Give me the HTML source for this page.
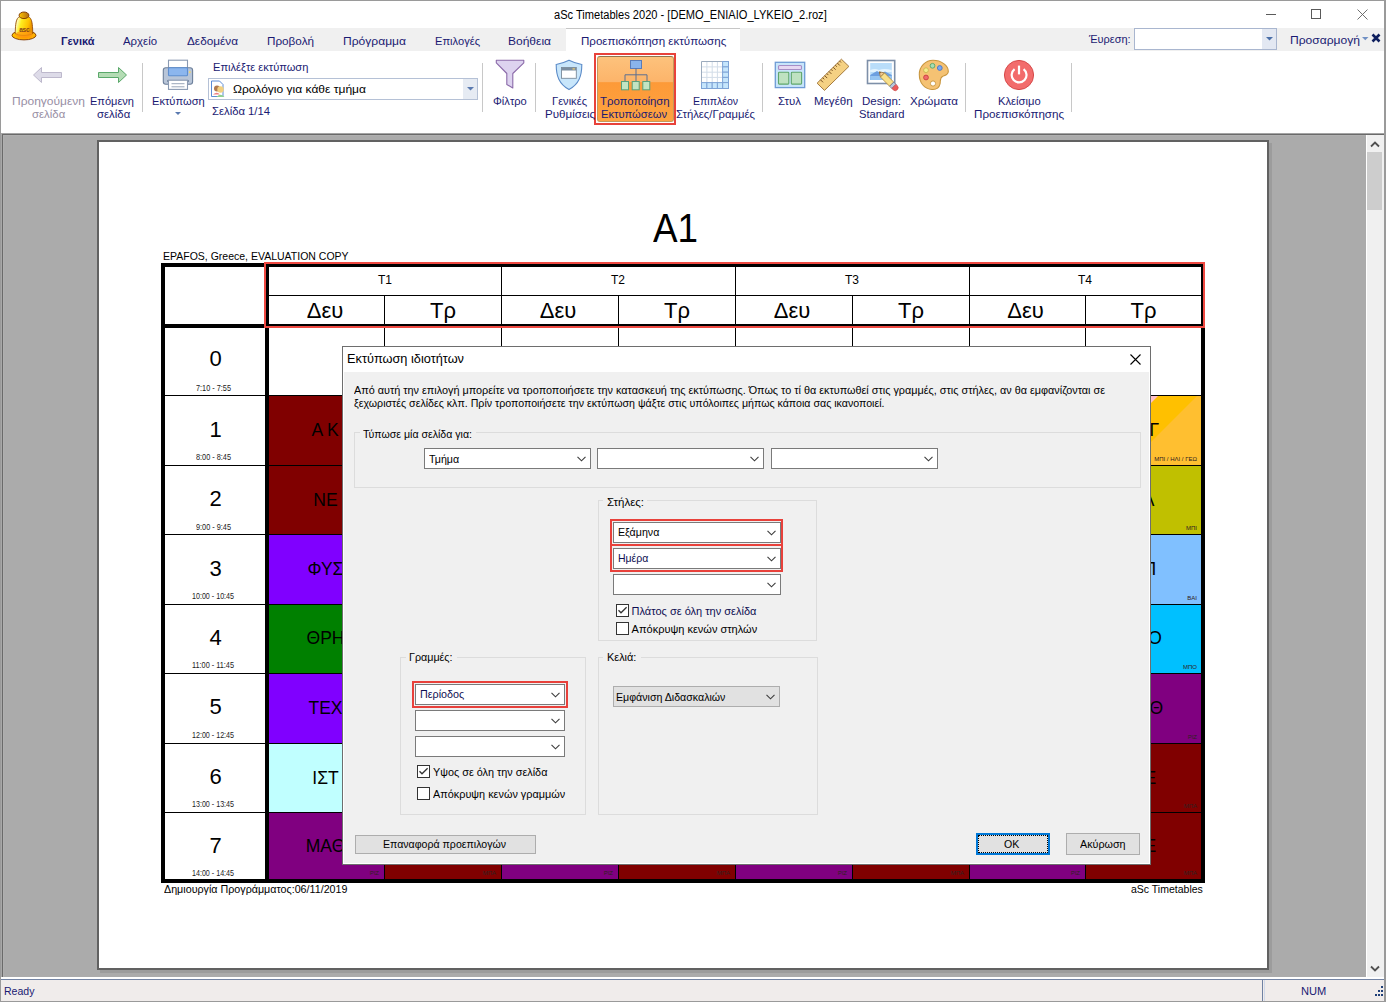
<!DOCTYPE html>
<html><head><meta charset="utf-8">
<style>
html,body{margin:0;padding:0;}
body{width:1386px;height:1002px;position:relative;overflow:hidden;background:#fff;font-family:"Liberation Sans",sans-serif;}
.a{position:absolute;box-sizing:border-box;}
.t{position:absolute;white-space:nowrap;transform-origin:0 0;font-family:"Liberation Sans",sans-serif;}
svg{position:absolute;overflow:visible;}
</style></head><body>
<!-- window frame -->
<div class="a" style="left:0;top:0;width:1386px;height:1px;background:#9a9a9a"></div>
<div class="a" style="left:0;top:0;width:1px;height:1002px;background:#9a9a9a"></div>
<div class="a" style="left:1384px;top:0;width:2px;height:1002px;background:#9a9a9a"></div>

<!-- menu band -->
<div class="a" style="left:1px;top:28px;width:1383px;height:23px;background:#f0f0f0"></div>
<div class="a" style="left:566px;top:28px;width:174px;height:23px;background:#fff;border-top:1px solid #c6c6c6"></div>
<!-- search combo -->
<div class="a" style="left:1134px;top:28px;width:143px;height:22px;background:#fff;border:1px solid #a9b6cf"></div>
<div class="a" style="left:1262px;top:29px;width:14px;height:20px;background:#e3e8f2"></div>
<svg style="left:1266px;top:37px" width="7" height="4"><path d="M0 0H7L3.5 3.5Z" fill="#4a6fa8"/></svg>
<svg style="left:1361.5px;top:37px" width="7" height="4"><path d="M0 0H6.5L3.25 3.2Z" fill="#7090c4"/></svg>
<svg style="left:1371px;top:33px" width="10" height="10"><path d="M1.5 1.5L8.5 8.5M8.5 1.5L1.5 8.5" stroke="#0e1f5e" stroke-width="2.6"/></svg>

<!-- window buttons -->
<div class="a" style="left:1266px;top:14px;width:10px;height:1px;background:#5a5a5a"></div>
<div class="a" style="left:1311px;top:9px;width:10px;height:10px;border:1px solid #5a5a5a"></div>
<svg style="left:1357px;top:9px" width="11" height="11"><path d="M0.5 0.5L10.5 10.5M10.5 0.5L0.5 10.5" stroke="#606060" stroke-width="0.9"/></svg>

<!-- bell icon -->
<svg style="left:0px;top:0px" width="48" height="48" viewBox="0 0 48 48">
 <defs>
  <linearGradient id="bgb" x1="0" x2="1" y1="0" y2="0.3"><stop offset="0" stop-color="#ffb800"/><stop offset="0.2" stop-color="#fffbb0"/><stop offset="0.4" stop-color="#ffee20"/><stop offset="0.8" stop-color="#ffc000"/><stop offset="1" stop-color="#e89000"/></linearGradient>
  <radialGradient id="bgr" cx="0.55" cy="0.6" r="0.6"><stop offset="0" stop-color="#ff8a00"/><stop offset="0.6" stop-color="#ffb000"/><stop offset="1" stop-color="#ffd000"/></radialGradient>
  <linearGradient id="bgk" x1="0" x2="1"><stop offset="0" stop-color="#ffc400"/><stop offset="1" stop-color="#b06a10"/></linearGradient>
 </defs>
 <ellipse cx="24" cy="35.3" rx="12" ry="4.6" fill="url(#bgr)" stroke="#7e3400" stroke-width="0.9"/>
 <path d="M15.2 33.5 C15.5 28 15.2 20 18.5 17.3 C21 15.5 27 15.5 29.5 17.3 C32.8 20 32.5 28 32.8 33.5 C30 36 18 36 15.2 33.5 Z" fill="url(#bgb)" stroke="#8a4000" stroke-width="0.8"/>
 <ellipse cx="24" cy="34.2" rx="8.5" ry="3.2" fill="#ff9a10" opacity="0.75"/>
 <ellipse cx="24" cy="15.3" rx="4.9" ry="3.3" fill="url(#bgk)" stroke="#7a3400" stroke-width="0.9"/>
 <text x="24.3" y="31.8" font-family="Liberation Sans" font-size="6.6" font-weight="bold" fill="#8a4418" text-anchor="middle" letter-spacing="-0.3">asc</text>
</svg>

<!-- ribbon -->
<div class="a" style="left:142px;top:63px;width:1px;height:49px;background:#c8c8c8"></div>
<div class="a" style="left:482px;top:63px;width:1px;height:49px;background:#c8c8c8"></div>
<div class="a" style="left:535px;top:63px;width:1px;height:49px;background:#c8c8c8"></div>
<div class="a" style="left:762px;top:63px;width:1px;height:49px;background:#c8c8c8"></div>
<div class="a" style="left:965px;top:63px;width:1px;height:49px;background:#c8c8c8"></div>
<div class="a" style="left:1071px;top:63px;width:1px;height:49px;background:#c8c8c8"></div>

<!-- arrows -->
<svg style="left:32px;top:66px" width="32" height="18" viewBox="0 0 32 18">
 <path d="M1.5 9 L9.5 1.5 V6.5 H29.5 V11.5 H9.5 V16.5 Z" fill="#dddbe8" stroke="#bdb8cc" stroke-width="1"/>
</svg>
<svg style="left:97px;top:66px" width="32" height="18" viewBox="0 0 32 18">
 <path d="M29.5 9 L21.5 1.5 V6.5 H1.5 V11.5 H21.5 V16.5 Z" fill="#b4dcb4" stroke="#5aa86a" stroke-width="1"/>
</svg>
<!-- printer -->
<svg style="left:162px;top:59px" width="32" height="32" viewBox="0 0 32 32">
 <rect x="6.5" y="1.2" width="19" height="8" fill="#fff" stroke="#8a9ab2" stroke-width="1.1"/>
 <rect x="1.3" y="8.7" width="29.3" height="16.5" rx="2.5" fill="#b8c5d8" stroke="#6c7f9a" stroke-width="1.1"/>
 <rect x="6.5" y="8.7" width="19" height="8" rx="1" fill="#8cb6ee" stroke="#5d8ed0" stroke-width="1.1"/>
 <rect x="27" y="12.3" width="1.6" height="1.6" fill="#f6d860"/>
 <rect x="5" y="21" width="22" height="2" rx="1" fill="#6c7f9a"/>
 <rect x="6.5" y="21.2" width="19" height="9.2" fill="#fff" stroke="#8a9ab2" stroke-width="1.1"/>
 <rect x="9.5" y="24.2" width="13" height="1" fill="#9aa6b8"/>
 <rect x="9.5" y="27.3" width="13" height="1" fill="#9aa6b8"/>
</svg>
<svg style="left:175px;top:112px" width="6" height="4"><path d="M0 0H6L3 3Z" fill="#5a7ab0"/></svg>
<!-- print combo -->
<div class="a" style="left:208px;top:78px;width:270px;height:22px;background:#fff;border:1px solid #b5c1d6"></div>
<div class="a" style="left:463px;top:79px;width:14px;height:20px;background:#e6ebf3"></div>
<svg style="left:467px;top:87px" width="7" height="4"><path d="M0 0H7L3.5 3.5Z" fill="#5a7ab0"/></svg>
<svg style="left:210px;top:80px" width="20" height="18" viewBox="0 0 20 18">
 <path d="M1.5 1 H9.5 L13 4.5 V16.5 H1.5 Z" fill="#fff" stroke="#4a7fd0" stroke-width="0.9"/>
 <circle cx="7" cy="8.5" r="3" fill="#b07a50"/>
 <path d="M3 14.5 Q7 11 10 14.5 Z" fill="#f08080"/>
 <circle cx="10.5" cy="9.5" r="3.2" fill="#f2d080"/>
 <path d="M6.5 17 Q10.5 12.5 14.5 17 Z" fill="#90d090"/>
</svg>

<!-- funnel -->
<svg style="left:495px;top:59px" width="31" height="31" viewBox="0 0 31 31">
 <path d="M1.3 1.3 H28.8 V3.8 L17.8 14.5 V29 L11.8 25.5 V14.5 L1.3 3.8 Z" fill="#ddd3ef" stroke="#8b6aa9" stroke-width="1.1" stroke-linejoin="round"/>
</svg>
<!-- shield -->
<svg style="left:555px;top:59px" width="28" height="32" viewBox="0 0 28 32">
 <path d="M14 1.2 C10 3.2 5.5 4.8 1.2 5.5 C1.2 17 4 25 14 30.6 C24 25 26.8 17 26.8 5.5 C22.5 4.8 18 3.2 14 1.2 Z" fill="#c8e6fb" stroke="#5b8bc8" stroke-width="1.1"/>
 <rect x="6.5" y="8.5" width="14.8" height="10.8" fill="#fff" stroke="#7a8a9a" stroke-width="0.9"/>
 <rect x="6.5" y="8.5" width="14.8" height="3" fill="#7a8da0"/>
 <rect x="17.5" y="9.3" width="2.4" height="1.2" fill="#f0d070"/>
</svg>

<!-- orange active button -->
<div class="a" style="left:594px;top:53px;width:82px;height:72px;border:2px solid #e8423a"></div>
<div class="a" style="left:597px;top:56px;width:77px;height:66px;border:1px solid #c49a5a;border-top-color:#8e7650;border-radius:3px;background:linear-gradient(#fdc27c 0%,#fcb46a 39%,#fd9a38 40%,#fea340 100%)"></div>
<svg style="left:620px;top:59px" width="32" height="32" viewBox="0 0 32 32">
 <rect x="10.5" y="1.5" width="11" height="8" fill="#8ab4ec" stroke="#5a7cb8" stroke-width="1"/>
 <path d="M16 9.5 V15.8 M5 22 V15.8 H27 V22 M16 15.8 V22" fill="none" stroke="#5a6e92" stroke-width="1"/>
 <rect x="1.5" y="22.5" width="7" height="8.3" fill="#c2e4c2" stroke="#5aa07a" stroke-width="1"/>
 <rect x="12.2" y="22.5" width="7" height="8.3" fill="#c2e4c2" stroke="#5aa07a" stroke-width="1"/>
 <rect x="22.8" y="22.5" width="7" height="8.3" fill="#c2e4c2" stroke="#5aa07a" stroke-width="1"/>
</svg>

<!-- grid icon -->
<svg style="left:701px;top:61px" width="28" height="28" viewBox="0 0 28 28">
 <rect x="0.5" y="0.5" width="27" height="27" fill="#fff"/>
 <path d="M5.9 0.5V21.6M11.2 0.5V21.6M16.4 0.5V21.6M0.5 5.9H21.6M0.5 11.2H21.6M0.5 16.4H21.6" stroke="#d3dde8" stroke-width="1"/>
 <path d="M0.5 21.6V0.5H21.6" fill="none" stroke="#9cabbd" stroke-width="1"/>
 <rect x="21.6" y="0.5" width="5.899999999999999" height="5.4" fill="#c6e6fc" stroke="#7ea4d6" stroke-width="1"/><rect x="21.6" y="5.9" width="5.899999999999999" height="5.299999999999999" fill="#c6e6fc" stroke="#7ea4d6" stroke-width="1"/><rect x="21.6" y="11.2" width="5.899999999999999" height="5.199999999999999" fill="#c6e6fc" stroke="#7ea4d6" stroke-width="1"/><rect x="21.6" y="16.4" width="5.899999999999999" height="5.200000000000003" fill="#c6e6fc" stroke="#7ea4d6" stroke-width="1"/><rect x="21.6" y="21.6" width="5.899999999999999" height="5.899999999999999" fill="#c6e6fc" stroke="#7ea4d6" stroke-width="1"/><rect x="0.5" y="21.6" width="5.4" height="5.899999999999999" fill="#c6e6fc" stroke="#7ea4d6" stroke-width="1"/><rect x="5.9" y="21.6" width="5.299999999999999" height="5.899999999999999" fill="#c6e6fc" stroke="#7ea4d6" stroke-width="1"/><rect x="11.2" y="21.6" width="5.199999999999999" height="5.899999999999999" fill="#c6e6fc" stroke="#7ea4d6" stroke-width="1"/><rect x="16.4" y="21.6" width="5.200000000000003" height="5.899999999999999" fill="#c6e6fc" stroke="#7ea4d6" stroke-width="1"/>
</svg>

<!-- style icon -->
<svg style="left:774px;top:61px" width="32" height="28" viewBox="0 0 32 28">
 <rect x="1.3" y="1.3" width="29.4" height="25.3" fill="#c8e5fa" stroke="#6f9bd5" stroke-width="1.3"/>
 <rect x="4.5" y="4.5" width="23" height="4" rx="1" fill="#e6d8f2" stroke="#a68dc6" stroke-width="1.1"/>
 <rect x="4.5" y="11.3" width="10.3" height="11.8" rx="0.8" fill="#bfe2c1" stroke="#5fa66b" stroke-width="1.1"/>
 <rect x="17.3" y="11.3" width="10.3" height="11.8" rx="0.8" fill="#bfe2c1" stroke="#5fa66b" stroke-width="1.1"/>
</svg>
<!-- ruler -->
<svg style="left:816px;top:58px" width="34" height="34" viewBox="0 0 34 34">
 <path d="M1.1 25.2 L25.4 1.2 L32.9 8.4 L8.5 32.4 Z" fill="#f5d183" stroke="#a57b40" stroke-width="1"/>
 <path d="M4.5 21.8l2.5 2.5M6.6 19.7l1.6 1.6M8.7 17.6l2.5 2.5M10.8 15.5l1.6 1.6M12.9 13.4l2.5 2.5M15 11.3l1.6 1.6M17.1 9.2l2.5 2.5M19.2 7.1l1.6 1.6M21.3 5l2.5 2.5M23.4 2.9l1.6 1.6" stroke="#7a5020" stroke-width="1"/>
</svg>
<!-- design icon -->
<svg style="left:866px;top:59px" width="34" height="33" viewBox="0 0 34 33">
 <rect x="1.5" y="1.5" width="27.2" height="23" fill="#fff" stroke="#7d8fa8" stroke-width="1.6"/>
 <rect x="4.2" y="4" width="21.6" height="17" fill="#b9ddf9"/>
 <path d="M4.2 11 Q9 9 13 11 Q18 9 25.8 11 V13 H4.2Z" fill="#e4f4fe"/>
 <path d="M4.2 16 L11 12 L15 14.5 L19 12.5 L25.8 16 V21 H4.2 Z" fill="#6c9fe0"/>
 <rect x="4.2" y="17" width="21.6" height="4" fill="#96c5f2"/>
 <g transform="translate(13.3 12.8) rotate(45)">
  <path d="M0 0 L4.5 -2.9 V2.9 Z" fill="#f2c890" stroke="#a07a40" stroke-width="0.8" stroke-linejoin="round"/>
  <path d="M0 0 L1.6 -1 V1 Z" fill="#7a5a30"/>
  <rect x="4.5" y="-2.9" width="13" height="5.8" fill="#f8e08a" stroke="#b08a40" stroke-width="0.8"/>
  <rect x="17.5" y="-2.9" width="3.2" height="5.8" fill="#b8c8dc" stroke="#6a7a90" stroke-width="0.8"/>
  <path d="M20.7 -2.9 H22.5 A2.9 2.9 0 0 1 22.5 2.9 H20.7 Z" fill="#ea5a5a" stroke="#c84040" stroke-width="0.6"/>
 </g>
</svg>
<!-- palette -->
<svg style="left:918px;top:59px" width="32" height="32" viewBox="0 0 32 32">
 <path d="M15 1.3 C23 1.3 30.5 6.5 30.3 12.5 C30.1 16 27 16.3 24.5 17.5 C21.5 19 22.7 22 22 25 C21 29.5 17.5 30.7 14 30.5 C6.5 30 1.3 24 1.3 15.5 C1.3 7.5 7.5 1.3 15 1.3 Z" fill="#f5c273" stroke="#c8963e" stroke-width="1.1"/>
 <circle cx="14.5" cy="6.8" r="2.4" fill="#a6dcb4" stroke="#56a66a" stroke-width="0.9"/>
 <circle cx="21.8" cy="9" r="2.4" fill="#7ca8ee" stroke="#4a74c4" stroke-width="0.9"/>
 <circle cx="8" cy="11.2" r="2.4" fill="#f6ec8c" stroke="#c8b850" stroke-width="0.9"/>
 <circle cx="8" cy="18.5" r="2.4" fill="#f06a6a" stroke="#c84040" stroke-width="0.9"/>
 <circle cx="15" cy="24.5" r="2.6" fill="#fff" stroke="#c8963e" stroke-width="0.9"/>
</svg>
<!-- power -->
<svg style="left:1003px;top:59px" width="32" height="32" viewBox="0 0 32 32">
 <circle cx="16" cy="16" r="14.6" fill="#f26c6c" stroke="#d64a4a" stroke-width="1"/>
 <path d="M11.6 10.2 A7.4 7.4 0 1 0 20.6 10.2" fill="none" stroke="#fff" stroke-width="2.2"/>
 <path d="M16 6.6 V15.4" stroke="#fff" stroke-width="2.2"/>
</svg>

<!-- ribbon bottom / main area -->
<div class="a" style="left:1px;top:133px;width:1383px;height:1px;background:#a4a4a4"></div>
<div class="a" style="left:1px;top:134px;width:1383px;height:1px;background:#6a6a6a"></div>
<div class="a" style="left:1px;top:135px;width:1365px;height:842px;background:#ababab"></div>
<div class="a" style="left:1px;top:134px;width:1px;height:843px;background:#a8a8a8"></div>
<div class="a" style="left:2px;top:134px;width:1px;height:843px;background:#6a6a6a"></div>
<div class="a" style="left:3px;top:135px;width:1px;height:842px;background:#b0b0b0"></div>
<div class="a" style="left:3px;top:135px;width:1363px;height:1px;background:#b0b0b0"></div>
<!-- page shadow + page -->
<div class="a" style="left:100px;top:143px;width:1172px;height:830px;background:#9c9c9c"></div>
<div class="a" style="left:97px;top:140px;width:1172px;height:830px;background:#fff;border:2px solid #616161"></div>

<!-- scrollbar -->
<div class="a" style="left:1366px;top:135px;width:18px;height:842px;background:#f0f0f0;border-left:1px solid #fff"></div>
<div class="a" style="left:1367px;top:152px;width:15px;height:58px;background:#cdcdcd"></div>
<svg style="left:1370px;top:141px" width="10" height="7"><path d="M1 5.5L5 1.5L9 5.5" fill="none" stroke="#505050" stroke-width="1.8"/></svg>
<svg style="left:1370px;top:965px" width="10" height="7"><path d="M1 1.5L5 5.5L9 1.5" fill="none" stroke="#505050" stroke-width="1.8"/></svg>

<!-- status bar -->
<div class="a" style="left:1px;top:977px;width:1383px;height:2px;background:#fff"></div>
<div class="a" style="left:1px;top:979px;width:1383px;height:1px;background:#7384a4"></div>
<div class="a" style="left:1px;top:980px;width:1383px;height:21px;background:#f0eceb"></div>
<div class="a" style="left:1px;top:1001px;width:1385px;height:1px;background:#9a9a9a"></div>
<div class="a" style="left:1262px;top:980px;width:1px;height:21px;background:#6f81a2"></div>
<div class="a" style="left:1264px;top:980px;width:1px;height:21px;background:#d0d8e8"></div>
<svg style="left:1374px;top:985px" width="10" height="12">
 <rect x="7" y="1" width="2" height="2" fill="#1f3f78"/>
 <rect x="4" y="5" width="2" height="2" fill="#1f3f78"/><rect x="7" y="5" width="2" height="2" fill="#1f3f78"/>
 <rect x="1" y="9" width="2" height="2" fill="#1f3f78"/><rect x="4" y="9" width="2" height="2" fill="#1f3f78"/><rect x="7" y="9" width="2" height="2" fill="#1f3f78"/>
</svg>

<div class="a" style="left:269px;top:396px;width:115px;height:69px;background:#800000;"></div>
<div class="a" style="left:1086px;top:396px;width:115px;height:69px;background:#ffc000;"></div>
<div class="a" style="left:269px;top:466px;width:115px;height:68px;background:#800000;"></div>
<div class="a" style="left:1086px;top:466px;width:115px;height:68px;background:#c0c000;"></div>
<div class="a" style="left:269px;top:535px;width:115px;height:69px;background:#8000ff;"></div>
<div class="a" style="left:1086px;top:535px;width:115px;height:69px;background:#80c0ff;"></div>
<div class="a" style="left:269px;top:605px;width:115px;height:68px;background:#008000;"></div>
<div class="a" style="left:1086px;top:605px;width:115px;height:68px;background:#00c0ff;"></div>
<div class="a" style="left:269px;top:674px;width:115px;height:69px;background:#8000ff;"></div>
<div class="a" style="left:1086px;top:674px;width:115px;height:69px;background:#800080;"></div>
<div class="a" style="left:269px;top:744px;width:115px;height:68px;background:#c0ffff;"></div>
<div class="a" style="left:1086px;top:744px;width:115px;height:68px;background:#800000;"></div>
<div class="a" style="left:269px;top:813px;width:115px;height:66px;background:#800080;"></div>
<div class="a" style="left:1086px;top:813px;width:115px;height:66px;background:#800000;"></div>
<div class="a" style="left:269px;top:813px;width:115px;height:66px;background:#800080;"></div>
<div class="a" style="left:385px;top:813px;width:116px;height:66px;background:#800000;"></div>
<div class="a" style="left:502px;top:813px;width:116px;height:66px;background:#800080;"></div>
<div class="a" style="left:619px;top:813px;width:116px;height:66px;background:#800000;"></div>
<div class="a" style="left:736px;top:813px;width:116px;height:66px;background:#800080;"></div>
<div class="a" style="left:853px;top:813px;width:116px;height:66px;background:#800000;"></div>
<div class="a" style="left:970px;top:813px;width:115px;height:66px;background:#800080;"></div>
<div class="a" style="left:1086px;top:813px;width:115px;height:66px;background:#800000;"></div>
<svg style="left:1086px;top:396px" width="115" height="69" viewBox="0 0 115 69"><polygon points="111,0 115,0 115,69 42,69" fill="#ffbf30"/><polygon points="64,0 72,0 64,8" fill="#ffc0cb"/></svg>
<div class="a" style="left:161px;top:263px;width:1044px;height:4px;background:#000;"></div>
<div class="a" style="left:161px;top:879px;width:1044px;height:4px;background:#000;"></div>
<div class="a" style="left:161px;top:263px;width:4px;height:620px;background:#000;"></div>
<div class="a" style="left:1201px;top:263px;width:4px;height:620px;background:#000;"></div>
<div class="a" style="left:265px;top:263px;width:4px;height:620px;background:#000;"></div>
<div class="a" style="left:161px;top:324px;width:1044px;height:4px;background:#000;"></div>
<div class="a" style="left:269px;top:295px;width:932px;height:1px;background:#000;"></div>
<div class="a" style="left:501px;top:267px;width:1px;height:612px;background:#000;"></div>
<div class="a" style="left:735px;top:267px;width:1px;height:612px;background:#000;"></div>
<div class="a" style="left:969px;top:267px;width:1px;height:612px;background:#000;"></div>
<div class="a" style="left:384px;top:296px;width:1px;height:583px;background:#000;"></div>
<div class="a" style="left:618px;top:296px;width:1px;height:583px;background:#000;"></div>
<div class="a" style="left:852px;top:296px;width:1px;height:583px;background:#000;"></div>
<div class="a" style="left:1085px;top:296px;width:1px;height:583px;background:#000;"></div>
<div class="a" style="left:165px;top:395px;width:1036px;height:1px;background:#000;"></div>
<div class="a" style="left:165px;top:465px;width:1036px;height:1px;background:#000;"></div>
<div class="a" style="left:165px;top:534px;width:1036px;height:1px;background:#000;"></div>
<div class="a" style="left:165px;top:604px;width:1036px;height:1px;background:#000;"></div>
<div class="a" style="left:165px;top:673px;width:1036px;height:1px;background:#000;"></div>
<div class="a" style="left:165px;top:743px;width:1036px;height:1px;background:#000;"></div>
<div class="a" style="left:165px;top:812px;width:1036px;height:1px;background:#000;"></div>
<div class="a" style="left:264px;top:262px;width:941px;height:66px;border:2px solid #ef4a42"></div>
<div class="t" style="left:653.40px;top:208.14px;font-size:40px;line-height:40px;color:#000;font-weight:normal;transform:scaleX(0.9198);">A1</div>
<div class="t" style="left:163.00px;top:251.11px;font-size:10.5px;line-height:10.5px;color:#000;font-weight:normal;">EPAFOS, Greece, EVALUATION COPY</div>
<div class="t" style="left:378.00px;top:273.84px;font-size:12px;line-height:12px;color:#000;font-weight:normal;">T1</div>
<div class="t" style="left:611.00px;top:273.84px;font-size:12px;line-height:12px;color:#000;font-weight:normal;">T2</div>
<div class="t" style="left:845.00px;top:273.84px;font-size:12px;line-height:12px;color:#000;font-weight:normal;">T3</div>
<div class="t" style="left:1078.00px;top:273.84px;font-size:12px;line-height:12px;color:#000;font-weight:normal;">T4</div>
<div class="t" style="left:306.73px;top:300.38px;font-size:22px;line-height:22px;color:#000;font-weight:normal;">Δευ</div>
<div class="t" style="left:430.02px;top:300.38px;font-size:22px;line-height:22px;color:#000;font-weight:normal;">Τρ</div>
<div class="t" style="left:539.73px;top:300.38px;font-size:22px;line-height:22px;color:#000;font-weight:normal;">Δευ</div>
<div class="t" style="left:664.02px;top:300.38px;font-size:22px;line-height:22px;color:#000;font-weight:normal;">Τρ</div>
<div class="t" style="left:773.73px;top:300.38px;font-size:22px;line-height:22px;color:#000;font-weight:normal;">Δευ</div>
<div class="t" style="left:898.02px;top:300.38px;font-size:22px;line-height:22px;color:#000;font-weight:normal;">Τρ</div>
<div class="t" style="left:1007.23px;top:300.38px;font-size:22px;line-height:22px;color:#000;font-weight:normal;">Δευ</div>
<div class="t" style="left:1130.52px;top:300.38px;font-size:22px;line-height:22px;color:#000;font-weight:normal;">Τρ</div>
<div class="t" style="left:163.50px;top:884.11px;font-size:10.5px;line-height:10.5px;color:#000;font-weight:normal;transform:scaleX(1.0205);">Δημιουργία Προγράμματος:06/11/2019</div>
<div class="t" style="left:1131.03px;top:884.11px;font-size:10.5px;line-height:10.5px;color:#000;font-weight:normal;">aSc Timetables</div>
<div class="t" style="left:209.38px;top:348.38px;font-size:22px;line-height:22px;color:#000;font-weight:normal;">0</div>
<div class="t" style="left:195.50px;top:383.80px;font-size:8.5px;line-height:8.5px;color:#222;font-weight:normal;transform:scaleX(0.8612);">7:10 - 7:55</div>
<div class="t" style="left:209.38px;top:419.38px;font-size:22px;line-height:22px;color:#000;font-weight:normal;">1</div>
<div class="t" style="left:195.50px;top:452.80px;font-size:8.5px;line-height:8.5px;color:#222;font-weight:normal;transform:scaleX(0.8612);">8:00 - 8:45</div>
<div class="t" style="left:209.38px;top:488.38px;font-size:22px;line-height:22px;color:#000;font-weight:normal;">2</div>
<div class="t" style="left:195.50px;top:522.80px;font-size:8.5px;line-height:8.5px;color:#222;font-weight:normal;transform:scaleX(0.8612);">9:00 - 9:45</div>
<div class="t" style="left:209.38px;top:558.38px;font-size:22px;line-height:22px;color:#000;font-weight:normal;">3</div>
<div class="t" style="left:192.00px;top:591.80px;font-size:8.5px;line-height:8.5px;color:#222;font-weight:normal;transform:scaleX(0.8384);">10:00 - 10:45</div>
<div class="t" style="left:209.38px;top:627.38px;font-size:22px;line-height:22px;color:#000;font-weight:normal;">4</div>
<div class="t" style="left:192.00px;top:660.80px;font-size:8.5px;line-height:8.5px;color:#222;font-weight:normal;transform:scaleX(0.8601);">11:00 - 11:45</div>
<div class="t" style="left:209.38px;top:696.38px;font-size:22px;line-height:22px;color:#000;font-weight:normal;">5</div>
<div class="t" style="left:192.00px;top:730.80px;font-size:8.5px;line-height:8.5px;color:#222;font-weight:normal;transform:scaleX(0.8384);">12:00 - 12:45</div>
<div class="t" style="left:209.38px;top:766.38px;font-size:22px;line-height:22px;color:#000;font-weight:normal;">6</div>
<div class="t" style="left:192.00px;top:799.80px;font-size:8.5px;line-height:8.5px;color:#222;font-weight:normal;transform:scaleX(0.8384);">13:00 - 13:45</div>
<div class="t" style="left:209.38px;top:835.38px;font-size:22px;line-height:22px;color:#000;font-weight:normal;">7</div>
<div class="t" style="left:192.00px;top:868.80px;font-size:8.5px;line-height:8.5px;color:#222;font-weight:normal;transform:scaleX(0.8384);">14:00 - 14:45</div>
<div class="t" style="left:311.40px;top:422.19px;font-size:17.5px;line-height:17.5px;color:#000;font-weight:normal;">Α Κ</div>
<div class="t" style="left:313.34px;top:492.19px;font-size:17.5px;line-height:17.5px;color:#000;font-weight:normal;">ΝΕ</div>
<div class="t" style="left:307.56px;top:561.19px;font-size:17.5px;line-height:17.5px;color:#000;font-weight:normal;">ΦΥΣ</div>
<div class="t" style="left:306.54px;top:630.19px;font-size:17.5px;line-height:17.5px;color:#000;font-weight:normal;">ΘΡΗ</div>
<div class="t" style="left:308.48px;top:700.19px;font-size:17.5px;line-height:17.5px;color:#000;font-weight:normal;">ΤΕΧ</div>
<div class="t" style="left:312.32px;top:770.19px;font-size:17.5px;line-height:17.5px;color:#000;font-weight:normal;">ΙΣΤ</div>
<div class="t" style="left:305.75px;top:838.19px;font-size:17.5px;line-height:17.5px;color:#000;font-weight:normal;">ΜΑΘ</div>
<div class="t" style="left:1149.60px;top:422.19px;font-size:17.5px;line-height:17.5px;color:#000;font-weight:normal;">Γ</div>
<div class="t" style="left:1142.80px;top:492.19px;font-size:17.5px;line-height:17.5px;color:#000;font-weight:normal;">Λ</div>
<div class="t" style="left:1143.60px;top:561.19px;font-size:17.5px;line-height:17.5px;color:#000;font-weight:normal;">Π</div>
<div class="t" style="left:1148.20px;top:630.19px;font-size:17.5px;line-height:17.5px;color:#000;font-weight:normal;">Ο</div>
<div class="t" style="left:1149.50px;top:700.19px;font-size:17.5px;line-height:17.5px;color:#000;font-weight:normal;">Θ</div>
<div class="t" style="left:1144.60px;top:770.19px;font-size:17.5px;line-height:17.5px;color:#000;font-weight:normal;">Ε</div>
<div class="t" style="left:1144.60px;top:838.19px;font-size:17.5px;line-height:17.5px;color:#000;font-weight:normal;">Ε</div>
<div class="t" style="left:1154.20px;top:455.92px;font-size:6px;line-height:6px;color:#302020;font-weight:normal;">ΜΠΙ / ΗΛΙ / ΓΕΩ</div>
<div class="t" style="left:1186.00px;top:524.92px;font-size:6px;line-height:6px;color:#302020;font-weight:normal;">ΜΠΙ</div>
<div class="t" style="left:1187.33px;top:594.92px;font-size:6px;line-height:6px;color:#302020;font-weight:normal;">ΒΑΙ</div>
<div class="t" style="left:1183.00px;top:663.92px;font-size:6px;line-height:6px;color:#302020;font-weight:normal;">ΜΠΟ</div>
<div class="t" style="left:1187.67px;top:733.92px;font-size:6px;line-height:6px;color:#302020;font-weight:normal;">ΡΙΖ</div>
<div class="t" style="left:1183.67px;top:802.92px;font-size:6px;line-height:6px;color:#302020;font-weight:normal;">ΜΠΑ</div>
<div class="t" style="left:1183.67px;top:869.92px;font-size:6px;line-height:6px;color:#302020;font-weight:normal;">ΜΠΑ</div>
<div class="t" style="left:369.67px;top:869.92px;font-size:6px;line-height:6px;color:#302020;font-weight:normal;">ΡΙΖ</div>
<div class="t" style="left:482.67px;top:869.92px;font-size:6px;line-height:6px;color:#302020;font-weight:normal;">ΜΠΑ</div>
<div class="t" style="left:603.67px;top:869.92px;font-size:6px;line-height:6px;color:#302020;font-weight:normal;">ΡΙΖ</div>
<div class="t" style="left:716.67px;top:869.92px;font-size:6px;line-height:6px;color:#302020;font-weight:normal;">ΜΠΑ</div>
<div class="t" style="left:837.67px;top:869.92px;font-size:6px;line-height:6px;color:#302020;font-weight:normal;">ΡΙΖ</div>
<div class="t" style="left:950.67px;top:869.92px;font-size:6px;line-height:6px;color:#302020;font-weight:normal;">ΜΠΑ</div>
<div class="t" style="left:1070.67px;top:869.92px;font-size:6px;line-height:6px;color:#302020;font-weight:normal;">ΡΙΖ</div>

<div class="a" style="left:342px;top:346px;width:809px;height:519px;background:#fff;border:1px solid #6e6e6e;"></div>
<div class="a" style="left:344px;top:372px;width:805px;height:491px;background:#f0f0f0;"></div>
<svg style="left:1130px;top:354px" width="11" height="11"><path d="M0.5 0.5L10.5 10.5M10.5 0.5L0.5 10.5" stroke="#000" stroke-width="1.1"/></svg>
<div class="a" style="left:354px;top:432px;width:787px;height:56px;border:1px solid #dcdcdc;"></div>
<div class="a" style="left:598px;top:500px;width:219px;height:141px;border:1px solid #dcdcdc;"></div>
<div class="a" style="left:400px;top:657px;width:186px;height:158px;border:1px solid #dcdcdc;"></div>
<div class="a" style="left:598px;top:657px;width:220px;height:158px;border:1px solid #dcdcdc;"></div>
<div class="a" style="left:360px;top:428px;width:116px;height:11px;background:#f0f0f0;"></div>
<div class="a" style="left:603px;top:496px;width:44px;height:11px;background:#f0f0f0;"></div>
<div class="a" style="left:406px;top:653px;width:51px;height:11px;background:#f0f0f0;"></div>
<div class="a" style="left:603px;top:653px;width:38px;height:11px;background:#f0f0f0;"></div>
<div class="a" style="left:424px;top:448px;width:167px;height:21px;background:#fff;border:1px solid #7a7a7a;"></div>
<svg style="left:577.0px;top:455.5px" width="9" height="6"><path d="M0.5 0.8L4.5 4.8L8.5 0.8" fill="none" stroke="#3c3c3c" stroke-width="1.1"/></svg>
<div class="a" style="left:597px;top:448px;width:167px;height:21px;background:#fff;border:1px solid #7a7a7a;"></div>
<svg style="left:750.0px;top:455.5px" width="9" height="6"><path d="M0.5 0.8L4.5 4.8L8.5 0.8" fill="none" stroke="#3c3c3c" stroke-width="1.1"/></svg>
<div class="a" style="left:771px;top:448px;width:167px;height:21px;background:#fff;border:1px solid #7a7a7a;"></div>
<svg style="left:924.0px;top:455.5px" width="9" height="6"><path d="M0.5 0.8L4.5 4.8L8.5 0.8" fill="none" stroke="#3c3c3c" stroke-width="1.1"/></svg>
<div class="a" style="left:610px;top:519px;width:173px;height:53px;border:2px solid #e8413b;"></div>
<div class="a" style="left:610px;top:544px;width:173px;height:2px;background:#e8413b;"></div>
<div class="a" style="left:613px;top:522px;width:168px;height:21px;background:#fff;border:1px solid #7a7a7a;"></div>
<svg style="left:767.0px;top:529.5px" width="9" height="6"><path d="M0.5 0.8L4.5 4.8L8.5 0.8" fill="none" stroke="#3c3c3c" stroke-width="1.1"/></svg>
<div class="a" style="left:613px;top:548px;width:168px;height:21px;background:#fff;border:1px solid #7a7a7a;"></div>
<svg style="left:767.0px;top:555.5px" width="9" height="6"><path d="M0.5 0.8L4.5 4.8L8.5 0.8" fill="none" stroke="#3c3c3c" stroke-width="1.1"/></svg>
<div class="a" style="left:613px;top:574px;width:168px;height:21px;background:#fff;border:1px solid #7a7a7a;"></div>
<svg style="left:767.0px;top:581.5px" width="9" height="6"><path d="M0.5 0.8L4.5 4.8L8.5 0.8" fill="none" stroke="#3c3c3c" stroke-width="1.1"/></svg>
<div class="a" style="left:412px;top:681px;width:156px;height:27px;border:2px solid #e8413b;"></div>
<div class="a" style="left:415px;top:684px;width:150px;height:21px;background:#fff;border:1px solid #7a7a7a;"></div>
<svg style="left:551.0px;top:691.5px" width="9" height="6"><path d="M0.5 0.8L4.5 4.8L8.5 0.8" fill="none" stroke="#3c3c3c" stroke-width="1.1"/></svg>
<div class="a" style="left:415px;top:710px;width:150px;height:21px;background:#fff;border:1px solid #7a7a7a;"></div>
<svg style="left:551.0px;top:717.5px" width="9" height="6"><path d="M0.5 0.8L4.5 4.8L8.5 0.8" fill="none" stroke="#3c3c3c" stroke-width="1.1"/></svg>
<div class="a" style="left:415px;top:736px;width:150px;height:21px;background:#fff;border:1px solid #7a7a7a;"></div>
<svg style="left:551.0px;top:743.5px" width="9" height="6"><path d="M0.5 0.8L4.5 4.8L8.5 0.8" fill="none" stroke="#3c3c3c" stroke-width="1.1"/></svg>
<div class="a" style="left:613px;top:686px;width:167px;height:21px;background:#e1e1e1;border:1px solid #adadad;"></div>
<svg style="left:766.0px;top:693.5px" width="9" height="6"><path d="M0.5 0.8L4.5 4.8L8.5 0.8" fill="none" stroke="#3c3c3c" stroke-width="1.1"/></svg>
<div class="a" style="left:616px;top:604px;width:13px;height:13px;background:#fff;border:1px solid #333;"></div>
<svg style="left:616px;top:604px" width="13" height="13"><path d="M2.5 6.3L5 8.8L10.6 3.3" fill="none" stroke="#333" stroke-width="1.3"/></svg>
<div class="a" style="left:616px;top:622px;width:13px;height:13px;background:#fff;border:1px solid #333;"></div>
<div class="a" style="left:417px;top:765px;width:13px;height:13px;background:#fff;border:1px solid #333;"></div>
<svg style="left:417px;top:765px" width="13" height="13"><path d="M2.5 6.3L5 8.8L10.6 3.3" fill="none" stroke="#333" stroke-width="1.3"/></svg>
<div class="a" style="left:417px;top:787px;width:13px;height:13px;background:#fff;border:1px solid #333;"></div>
<div class="a" style="left:355px;top:835px;width:181px;height:19px;background:#e1e1e1;border:1px solid #adadad;"></div>
<div class="a" style="left:976px;top:833px;width:74px;height:22px;background:#e1e1e1;border:2px solid #0078d7;"></div>
<div class="a" style="left:978px;top:835px;width:70px;height:18px;border:1px dotted #000;"></div>
<div class="a" style="left:1066px;top:833px;width:74px;height:22px;background:#e1e1e1;border:1px solid #adadad;"></div>
<div class="t" style="left:347.00px;top:352.84px;font-size:12px;line-height:12px;color:#000;font-weight:normal;transform:scaleX(1.0630);">Εκτύπωση ιδιοτήτων</div>
<div class="t" style="left:354.00px;top:384.69px;font-size:11px;line-height:11px;color:#000;font-weight:normal;transform:scaleX(0.9855);">Από αυτή την επιλογή μπορείτε να τροποποιήσετε την κατασκευή της εκτύπωσης. Όπως το τί θα εκτυπωθεί στις γραμμές, στις στήλες, αν θα εμφανίζονται σε</div>
<div class="t" style="left:354.00px;top:397.69px;font-size:11px;line-height:11px;color:#000;font-weight:normal;transform:scaleX(0.9665);">ξεχωριστές σελίδες κλπ. Πρίν τροποποιήσετε την εκτύπωση ψάξτε στις υπόλοιπες μήπως κάποια σας ικανοποιεί.</div>
<div class="t" style="left:363.00px;top:428.69px;font-size:11px;line-height:11px;color:#000;font-weight:normal;transform:scaleX(0.9622);">Τύπωσε μία σελίδα για:</div>
<div class="t" style="left:428.50px;top:453.69px;font-size:11px;line-height:11px;color:#000;font-weight:normal;transform:scaleX(0.9721);">Τμήμα</div>
<div class="t" style="left:606.50px;top:496.69px;font-size:11px;line-height:11px;color:#000;font-weight:normal;transform:scaleX(1.0423);">Στήλες:</div>
<div class="t" style="left:617.50px;top:526.69px;font-size:11px;line-height:11px;color:#000;font-weight:normal;transform:scaleX(0.9685);">Εξάμηνα</div>
<div class="t" style="left:617.50px;top:552.69px;font-size:11px;line-height:11px;color:#0e0e52;font-weight:normal;transform:scaleX(0.9528);">Ημέρα</div>
<div class="t" style="left:631.60px;top:605.69px;font-size:11px;line-height:11px;color:#0e0e52;font-weight:normal;">Πλάτος σε όλη την σελίδα</div>
<div class="t" style="left:631.60px;top:623.69px;font-size:11px;line-height:11px;color:#000;font-weight:normal;">Απόκρυψη κενών στηλών</div>
<div class="t" style="left:409.00px;top:651.69px;font-size:11px;line-height:11px;color:#000;font-weight:normal;transform:scaleX(0.9751);">Γραμμές:</div>
<div class="t" style="left:419.50px;top:688.69px;font-size:11px;line-height:11px;color:#0e0e52;font-weight:normal;transform:scaleX(0.9799);">Περίοδος</div>
<div class="t" style="left:432.70px;top:766.69px;font-size:11px;line-height:11px;color:#000;font-weight:normal;transform:scaleX(0.9852);">Υψος σε όλη την σελίδα</div>
<div class="t" style="left:432.70px;top:788.69px;font-size:11px;line-height:11px;color:#000;font-weight:normal;transform:scaleX(0.9883);">Απόκρυψη κενών γραμμών</div>
<div class="t" style="left:606.60px;top:651.69px;font-size:11px;line-height:11px;color:#000;font-weight:normal;transform:scaleX(0.9932);">Κελιά:</div>
<div class="t" style="left:616.40px;top:691.69px;font-size:11px;line-height:11px;color:#000;font-weight:normal;transform:scaleX(0.9658);">Εμφάνιση Διδασκαλιών</div>
<div class="t" style="left:383.00px;top:838.69px;font-size:11px;line-height:11px;color:#000;font-weight:normal;transform:scaleX(0.9620);">Επαναφορά προεπιλογών</div>
<div class="t" style="left:1004.40px;top:838.69px;font-size:11px;line-height:11px;color:#000;font-weight:normal;transform:scaleX(0.9627);">OK</div>
<div class="t" style="left:1079.80px;top:838.69px;font-size:11px;line-height:11px;color:#000;font-weight:normal;transform:scaleX(0.9763);">Ακύρωση</div>

<div class="t" style="left:554.00px;top:9.42px;font-size:12.5px;line-height:12.5px;color:#000;font-weight:normal;transform:scaleX(0.8868);">aSc Timetables 2020  - [DEMO_ENIAIO_LYKEIO_2.roz]</div>
<div class="t" style="left:61.00px;top:36.27px;font-size:11.5px;line-height:11.5px;color:#1a1a72;font-weight:bold;transform:scaleX(0.9555);">Γενικά</div>
<div class="t" style="left:123.00px;top:36.27px;font-size:11.5px;line-height:11.5px;color:#1a1a72;font-weight:normal;transform:scaleX(0.9905);">Αρχείο</div>
<div class="t" style="left:187.00px;top:36.27px;font-size:11.5px;line-height:11.5px;color:#1a1a72;font-weight:normal;transform:scaleX(1.0250);">Δεδομένα</div>
<div class="t" style="left:267.00px;top:36.27px;font-size:11.5px;line-height:11.5px;color:#1a1a72;font-weight:normal;transform:scaleX(1.0178);">Προβολή</div>
<div class="t" style="left:343.00px;top:36.27px;font-size:11.5px;line-height:11.5px;color:#1a1a72;font-weight:normal;transform:scaleX(1.0485);">Πρόγραμμα</div>
<div class="t" style="left:435.00px;top:36.27px;font-size:11.5px;line-height:11.5px;color:#1a1a72;font-weight:normal;transform:scaleX(0.9667);">Επιλογές</div>
<div class="t" style="left:508.00px;top:36.27px;font-size:11.5px;line-height:11.5px;color:#1a1a72;font-weight:normal;transform:scaleX(1.0440);">Βοήθεια</div>
<div class="t" style="left:580.50px;top:36.27px;font-size:11.5px;line-height:11.5px;color:#1a1a72;font-weight:normal;transform:scaleX(1.0062);">Προεπισκόπηση εκτύπωσης</div>
<div class="t" style="left:1089.00px;top:34.27px;font-size:11.5px;line-height:11.5px;color:#1a1a72;font-weight:normal;transform:scaleX(0.9504);">Έυρεση:</div>
<div class="t" style="left:1289.50px;top:35.27px;font-size:11.5px;line-height:11.5px;color:#1a1a72;font-weight:normal;transform:scaleX(1.0495);">Προσαρμογή</div>
<div class="t" style="left:11.50px;top:96.27px;font-size:11.5px;line-height:11.5px;color:#978ea4;font-weight:normal;transform:scaleX(1.0433);">Προηγούμενη</div>
<div class="t" style="left:31.70px;top:109.27px;font-size:11.5px;line-height:11.5px;color:#978ea4;font-weight:normal;transform:scaleX(0.9887);">σελίδα</div>
<div class="t" style="left:90.20px;top:96.27px;font-size:11.5px;line-height:11.5px;color:#1a1a72;font-weight:normal;transform:scaleX(0.9586);">Επόμενη</div>
<div class="t" style="left:96.70px;top:109.27px;font-size:11.5px;line-height:11.5px;color:#1a1a72;font-weight:normal;transform:scaleX(0.9887);">σελίδα</div>
<div class="t" style="left:151.70px;top:96.27px;font-size:11.5px;line-height:11.5px;color:#1a1a72;font-weight:normal;transform:scaleX(0.9670);">Εκτύπωση</div>
<div class="t" style="left:212.70px;top:62.27px;font-size:11.5px;line-height:11.5px;color:#1a1a72;font-weight:normal;transform:scaleX(0.9626);">Επιλέξτε εκτύπωση</div>
<div class="t" style="left:233.40px;top:84.27px;font-size:11.5px;line-height:11.5px;color:#000;font-weight:normal;transform:scaleX(1.0460);">Ωρολόγιο για κάθε τμήμα</div>
<div class="t" style="left:212.00px;top:106.27px;font-size:11.5px;line-height:11.5px;color:#1a1a72;font-weight:normal;transform:scaleX(0.9803);">Σελίδα 1/14</div>
<div class="t" style="left:492.80px;top:96.27px;font-size:11.5px;line-height:11.5px;color:#1a1a72;font-weight:normal;transform:scaleX(0.9668);">Φίλτρο</div>
<div class="t" style="left:552.00px;top:96.27px;font-size:11.5px;line-height:11.5px;color:#1a1a72;font-weight:normal;transform:scaleX(0.9673);">Γενικές</div>
<div class="t" style="left:544.50px;top:109.27px;font-size:11.5px;line-height:11.5px;color:#1a1a72;font-weight:normal;transform:scaleX(1.0069);">Ρυθμίσεις</div>
<div class="t" style="left:599.70px;top:96.27px;font-size:11.5px;line-height:11.5px;color:#1a1a72;font-weight:normal;transform:scaleX(0.9898);">Τροποποίηση</div>
<div class="t" style="left:601.00px;top:109.27px;font-size:11.5px;line-height:11.5px;color:#1a1a72;font-weight:normal;transform:scaleX(0.9712);">Εκτυπώσεων</div>
<div class="t" style="left:692.50px;top:96.27px;font-size:11.5px;line-height:11.5px;color:#1a1a72;font-weight:normal;transform:scaleX(0.9182);">Επιπλέον</div>
<div class="t" style="left:676.00px;top:109.27px;font-size:11.5px;line-height:11.5px;color:#1a1a72;font-weight:normal;transform:scaleX(0.9807);">Στήλες/Γραμμές</div>
<div class="t" style="left:778.00px;top:96.27px;font-size:11.5px;line-height:11.5px;color:#1a1a72;font-weight:normal;transform:scaleX(0.9939);">Στυλ</div>
<div class="t" style="left:813.60px;top:96.27px;font-size:11.5px;line-height:11.5px;color:#1a1a72;font-weight:normal;transform:scaleX(1.0111);">Μεγέθη</div>
<div class="t" style="left:862.00px;top:96.27px;font-size:11.5px;line-height:11.5px;color:#1a1a72;font-weight:normal;">Design:</div>
<div class="t" style="left:858.80px;top:109.27px;font-size:11.5px;line-height:11.5px;color:#1a1a72;font-weight:normal;transform:scaleX(0.9749);">Standard</div>
<div class="t" style="left:910.00px;top:96.27px;font-size:11.5px;line-height:11.5px;color:#1a1a72;font-weight:normal;transform:scaleX(1.0107);">Χρώματα</div>
<div class="t" style="left:998.00px;top:96.27px;font-size:11.5px;line-height:11.5px;color:#1a1a72;font-weight:normal;transform:scaleX(0.9731);">Κλείσιμο</div>
<div class="t" style="left:974.30px;top:109.27px;font-size:11.5px;line-height:11.5px;color:#1a1a72;font-weight:normal;transform:scaleX(1.0105);">Προεπισκόπησης</div>
<div class="t" style="left:4.30px;top:985.69px;font-size:11px;line-height:11px;color:#1a1a72;font-weight:normal;transform:scaleX(0.9592);">Ready</div>
<div class="t" style="left:1300.50px;top:985.69px;font-size:11px;line-height:11px;color:#1a1a72;font-weight:normal;transform:scaleX(1.0099);">NUM</div>
</body></html>
